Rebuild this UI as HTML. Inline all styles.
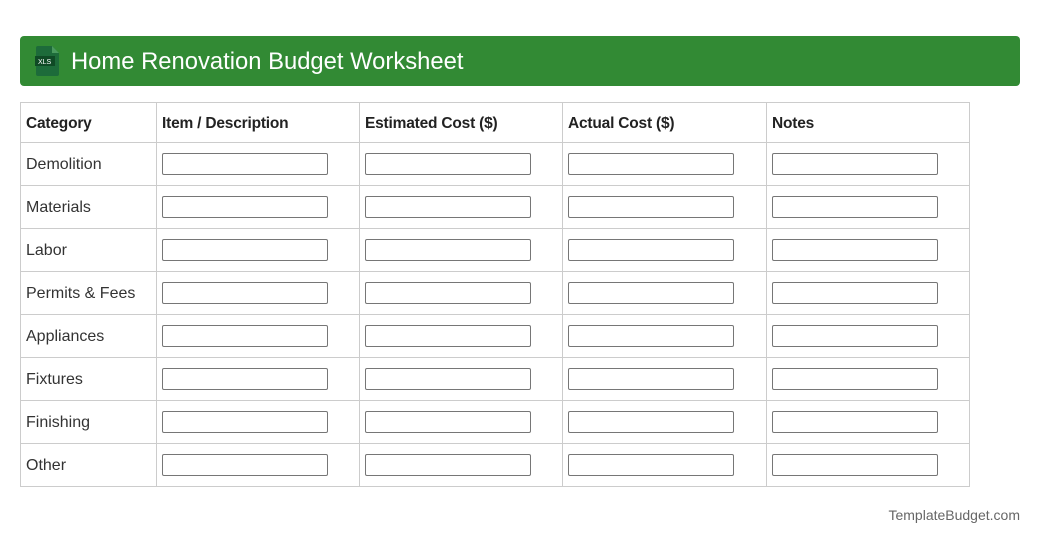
<!DOCTYPE html>
<html><head><style>
body{margin:0;background:#fff;font-family:"Liberation Sans",Roboto,sans-serif;color:#333;}
.hdr{position:absolute;left:20px;top:36px;width:1000px;height:50px;background:#328a34;border-radius:4px;}
.hdr span{position:absolute;left:51px;top:12px;color:#fff;font-size:23.8px;}
table{position:absolute;left:20px;top:102px;border-collapse:collapse;}
td,th{border:1px solid #ccc;padding:2px 5px 0;text-align:left;font-size:16px;}
th{height:37px;font-weight:bold;font-size:15.5px;letter-spacing:-0.2px;color:#222;}
td{height:40px;}
input{width:166px;height:22px;box-sizing:border-box;border:1px solid #767676;border-radius:2px;margin:-2px 0 0;display:block;}
.f{position:absolute;right:20px;top:507px;font-size:14px;color:#666;}
</style></head><body>
<div class="hdr">
<svg style="position:absolute;left:15px;top:10px" width="26" height="30" viewBox="0 0 26 30">
<path d="M3 0h14l7 7v21a2 2 0 0 1-2 2H3a2 2 0 0 1-2-2V2a2 2 0 0 1 2-2z" fill="#1d6b3a"/>
<path d="M17 0v7h7z" fill="#4a9a5e"/>
<rect x="0" y="10" width="20" height="10" fill="#0f4a25"/>
<text x="3" y="18" font-size="7" fill="#fff" font-family="Liberation Sans">XLS</text>
</svg>
<span>Home Renovation Budget Worksheet</span></div>
<table>
<tr><th style="width:125px">Category</th><th style="width:192px">Item / Description</th><th style="width:192px">Estimated Cost ($)</th><th style="width:193px">Actual Cost ($)</th><th style="width:192px">Notes</th></tr>
<tr><td>Demolition</td><td><input></td><td><input></td><td><input></td><td><input></td></tr>
<tr><td>Materials</td><td><input></td><td><input></td><td><input></td><td><input></td></tr>
<tr><td>Labor</td><td><input></td><td><input></td><td><input></td><td><input></td></tr>
<tr><td>Permits &amp; Fees</td><td><input></td><td><input></td><td><input></td><td><input></td></tr>
<tr><td>Appliances</td><td><input></td><td><input></td><td><input></td><td><input></td></tr>
<tr><td>Fixtures</td><td><input></td><td><input></td><td><input></td><td><input></td></tr>
<tr><td>Finishing</td><td><input></td><td><input></td><td><input></td><td><input></td></tr>
<tr><td>Other</td><td><input></td><td><input></td><td><input></td><td><input></td></tr>
</table>
<div class="f">TemplateBudget.com</div>
</body></html>
